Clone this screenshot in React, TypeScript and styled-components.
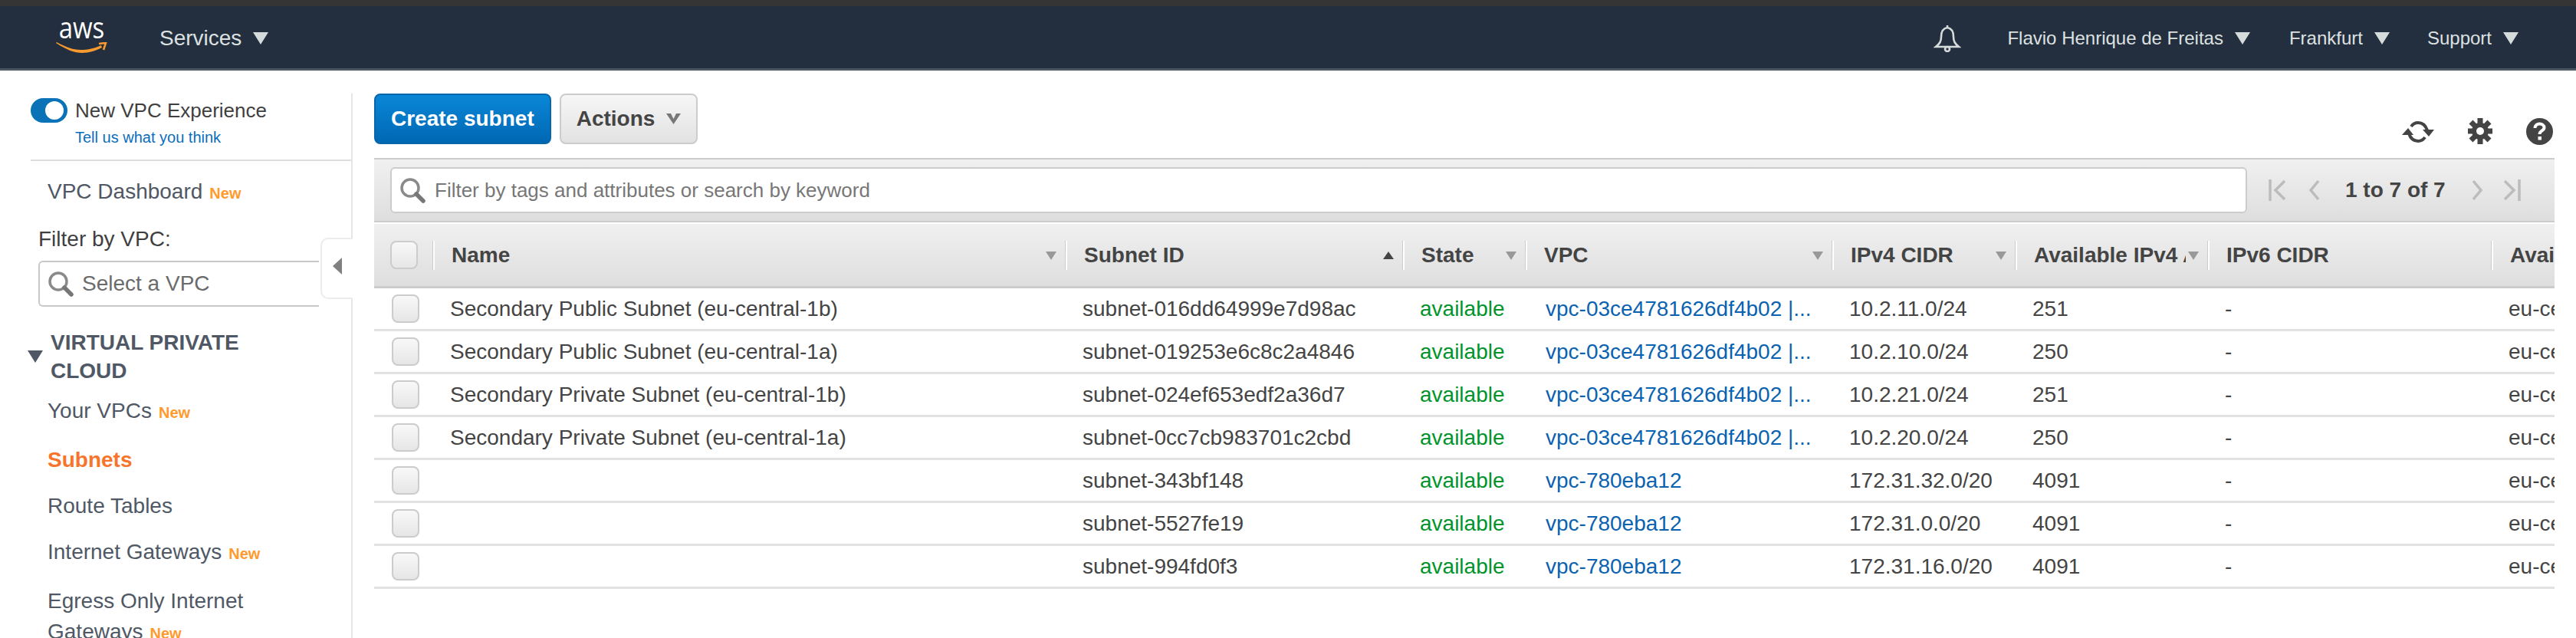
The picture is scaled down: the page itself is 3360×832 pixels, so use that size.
import styled, { createGlobalStyle } from 'styled-components';

const GlobalStyle = createGlobalStyle`
	html, body {
		margin: 0;
		padding: 0;
		background: #fff;
	}
	body {
		font-family: "Liberation Sans", Arial, sans-serif;
		color: #444;
	}
	* {
		box-sizing: border-box;
	}
`;

const COLUMNS = '79px 825px 440px 160px 400px 239px 251px 370px 80px';

const Page = styled.div`
	width: 3360px;
	height: 832px;
	overflow: hidden;
	display: flex;
	flex-direction: column;
`;

const TopStripe = styled.div`
	height: 8px;
	background: #353535;
	flex: none;
`;

const NavBar = styled.header`
	height: 84px;
	flex: none;
	display: flex;
	align-items: center;
	background: #232f3e;
	border-bottom: 3px solid #4a5664;
	padding: 3px 75px 0 73px;
`;

const Logo = styled.div`
	width: 67px;
	height: 50px;
	position: relative;
	margin-right: 68px;
`;

const LogoText = styled.span`
	display: block;
	font-family: "Open Sans", sans-serif;
	font-size: 33px;
	line-height: 34px;
	color: #fff;
	text-align: center;
	margin-top: -6px;
	transform: scaleY(1.18);
`;

const LogoSmile = styled.svg`
	position: absolute;
	left: 0;
	top: 30px;
`;

const NavItem = styled.div<{ $right?: number }>`
	display: flex;
	align-items: center;
	gap: 15px;
	color: #dde1e1;
	font-size: ${(p) => (p.$right ? 24 : 28)}px;
	margin-left: ${(p) => p.$right ?? 0}px;
	white-space: nowrap;
`;

const Caret = styled.span`
	width: 0;
	height: 0;
	border-left: 10px solid transparent;
	border-right: 10px solid transparent;
	border-top: 16px solid #d5dbdb;
`;

const Spacer = styled.div`
	flex: 1;
`;

const Body = styled.div`
	flex: 1;
	display: flex;
	min-height: 0;
	padding-top: 30px;
`;

const Sidebar = styled.aside`
	width: 460px;
	flex: none;
	border-right: 2px solid #e6e6e6;
	padding-left: 40px;
	position: relative;
`;

const ExperienceBox = styled.div`
	height: 88px;
	border-bottom: 2px solid #ddd;
	padding-top: 6px;
`;

const ExperienceRow = styled.div`
	display: flex;
	align-items: center;
	gap: 10px;
	font-size: 26px;
	color: #3f3f3f;
	line-height: 32px;
`;

const Toggle = styled.span`
	width: 48px;
	height: 32px;
	border-radius: 16px;
	background: #0a73b7;
	position: relative;
	flex: none;
	&::after {
		content: '';
		position: absolute;
		right: 5px;
		top: 4px;
		width: 24px;
		height: 24px;
		border-radius: 50%;
		background: #fff;
	}
`;

const FeedbackLink = styled.a`
	display: block;
	font-size: 20px;
	line-height: 24px;
	color: #0a6ebd;
	margin: 7px 0 0 58px;
`;

const NavList = styled.nav`
	padding: 20px 0 0 22px;
`;

const NavLink = styled.div<{ $active?: boolean; $top?: number }>`
	font-size: 28px;
	line-height: 40px;
	font-weight: ${(p) => (p.$active ? 700 : 400)};
	color: ${(p) => (p.$active ? '#f7742c' : '#4f5864')};
	margin-top: ${(p) => p.$top ?? 0}px;
	white-space: nowrap;
`;

const NewTag = styled.span`
	color: #ff9a2e;
	font-size: 20px;
	font-weight: 700;
	margin-left: 9px;
`;

const FilterBlock = styled.div`
	padding: 20px 0 0 10px;
`;

const FilterLabel = styled.div`
	font-size: 28px;
	line-height: 40px;
	color: #3f3f3f;
`;

const VpcSelect = styled.div`
	width: 366px;
	height: 60px;
	margin-top: 8px;
	border: 2px solid #c8c8c8;
	border-right: none;
	border-radius: 6px 0 0 6px;
	display: flex;
	align-items: center;
	gap: 11px;
	padding-left: 10px;
	font-size: 28px;
	color: #6b6b6b;
`;

const CollapseTab = styled.div`
	position: absolute;
	right: -2px;
	top: 188px;
	width: 42px;
	height: 80px;
	background: #fff;
	border: 2px solid #ececec;
	border-right: none;
	border-radius: 10px 0 0 10px;
	display: flex;
	align-items: center;
	justify-content: center;
	&::after {
		content: '';
		border-top: 11px solid transparent;
		border-bottom: 11px solid transparent;
		border-right: 12px solid #808080;
		margin-bottom: 6px;
	}
`;

const GroupHeading = styled.div`
	display: flex;
	align-items: center;
	gap: 10px;
	padding: 28px 0 0 0;
	margin-left: -4px;
	font-size: 28px;
	line-height: 37px;
	font-weight: 700;
	color: #4f5864;
`;

const GroupCaret = styled.span`
	flex: none;
	width: 0;
	height: 0;
	border-left: 10px solid transparent;
	border-right: 10px solid transparent;
	border-top: 16px solid #4f5864;
`;

const GroupLinks = styled.div`
	padding: 14px 0 0 22px;
`;

const Main = styled.main`
	flex: 1;
	min-width: 0;
	padding: 0 28px;
`;

const Toolbar = styled.div`
	height: 84px;
	display: flex;
	align-items: flex-start;
	gap: 11px;
`;

const ActionButton = styled.button<{ $primary?: boolean }>`
	height: 66px;
	display: flex;
	align-items: center;
	gap: 15px;
	padding: 0 20px;
	font: 700 28px "Liberation Sans", Arial, sans-serif;
	border-radius: 8px;
	color: ${(p) => (p.$primary ? '#fff' : '#444')};
	border: 2px solid ${(p) => (p.$primary ? '#0a66ab' : '#ccc')};
	background: ${(p) =>
		p.$primary
			? 'linear-gradient(#0a87d8, #0068b3)'
			: 'linear-gradient(#f6f6f6, #e2e2e2)'};
`;

const ToolIcons = styled.div`
	margin-left: auto;
	padding: 32px 2px 0 0;
	display: flex;
	align-items: flex-start;
	gap: 44px;
`;

const FilterBar = styled.div`
	height: 84px;
	display: flex;
	align-items: center;
	padding: 0 0 0 21px;
	border-top: 2px solid #ccc;
	border-bottom: 2px solid #ccc;
	background: linear-gradient(#f0f0f0, #dedede);
`;

const FilterInput = styled.div`
	width: 2422px;
	height: 60px;
	background: #fff;
	border: 2px solid #ccc;
	border-radius: 6px;
	display: flex;
	align-items: center;
	gap: 12px;
	padding-left: 10px;
	font-size: 26px;
	color: #777;
`;

const Pager = styled.div`
	display: flex;
	align-items: center;
	margin-left: 28px;
	font-size: 28px;
	font-weight: 700;
	color: #444;
`;

const PagerText = styled.span`
	margin: 0 35px 0 34px;
`;

const PagerGap = styled.span<{ $width: number }>`
	width: ${(p) => p.$width}px;
`;

const HeaderRow = styled.div`
	margin-top: 2px;
	height: 84px;
	display: grid;
	grid-template-columns: ${COLUMNS};
	background: linear-gradient(#f0f0f0, #dedede);
	border-bottom: 3px solid #ccc;
	padding-top: 22px;
	overflow: hidden;
`;

const HeaderCell = styled.div`
	height: 38px;
	display: flex;
	align-items: center;
	padding: 0 12px 0 22px;
	border-right: 2px solid #fff;
	box-shadow: inset -1px 0 0 #ccc;
	font-size: 28px;
	font-weight: 700;
	color: #444;
	min-width: 0;
	&:last-child {
		border-right: none;
		box-shadow: none;
		padding-right: 0;
	}
`;

const HeaderLabel = styled.span`
	flex: 1;
	min-width: 0;
	overflow: hidden;
	white-space: nowrap;
`;

const SortArrow = styled.span<{ $up?: boolean }>`
	flex: none;
	width: 0;
	height: 0;
	margin-left: 3px;
	border-left: 7px solid transparent;
	border-right: 7px solid transparent;
	border-top: ${(p) => (p.$up ? 'none' : '11px solid #999')};
	border-bottom: ${(p) => (p.$up ? '10px solid #444' : 'none')};
`;

const CheckCell = styled.div`
	padding: 0 0 0 21px;
	border-right: 2px solid #fff;
	box-shadow: inset -1px 0 0 #ccc;
	height: 38px;
`;

const Checkbox = styled.span`
	display: block;
	width: 36px;
	height: 37px;
	border: 2px solid #ccc;
	border-radius: 8px;
	background: linear-gradient(#f8f8f8, #e6e6e6);
`;

const DataRow = styled.div`
	height: 56px;
	display: grid;
	grid-template-columns: ${COLUMNS};
	align-items: center;
	border-bottom: 3px solid #e2e2e2;
	font-size: 28px;
	color: #444;
	overflow: hidden;
`;

const RowCheckCell = styled.div`
	padding-left: 23px;
`;

const Cell = styled.div<{ $tone?: 'ok' | 'link' }>`
	padding-left: ${(p) => (p.$tone === 'link' ? 24 : 20)}px;
	white-space: nowrap;
	overflow: hidden;
	color: ${(p) =>
		p.$tone === 'ok' ? '#00942b' : p.$tone === 'link' ? '#0a62b0' : '#444'};
`;

const SearchIcon = () => (
	<svg width="34" height="34" viewBox="0 0 34 34" fill="none">
		<circle cx="14" cy="14" r="11" stroke="#8a8a8a" strokeWidth="3.5" />
		<path d="M22 22l9 9" stroke="#777" strokeWidth="5.5" strokeLinecap="round" />
	</svg>
);

const BellIcon = () => (
	<svg width="36" height="36" viewBox="0 0 36 36" fill="none" stroke="#d5dbdb" strokeWidth="2.6">
		<path d="M18 1v3M18 4c-6 1-8 6-8 12 0 6-2 9-7 13h30c-5-4-7-7-7-13 0-6-2-11-8-12z" />
		<circle cx="18" cy="32" r="3" />
	</svg>
);

const Chevron = ({ dir, bar }: { dir: 'left' | 'right'; bar?: boolean }) => (
	<svg width={bar ? 22 : 14} height="28" viewBox={bar ? '0 0 22 28' : '0 0 14 28'} fill="none" stroke="#bcbcbc" strokeWidth="3.5">
		{dir === 'left' && !bar && <path d="M13 2L3 14l10 12" />}
		{dir === 'right' && !bar && <path d="M1 2l10 12L1 26" />}
		{dir === 'left' && bar && <path d="M2 0v28M21 2L9 14l12 12" />}
		{dir === 'right' && bar && <path d="M20 0v28M1 2l12 12L1 26" />}
	</svg>
);

const RefreshIcon = () => (
	<svg width="42" height="36" viewBox="0 0 42 36" fill="none">
		<path d="M12 11c2-3 5-5 9-5 6 0 10 4 12 10" stroke="#444" strokeWidth="4" />
		<path d="M30 25c-2 3-5 5-9 5-6 0-10-4-12-10" stroke="#444" strokeWidth="4" />
		<path d="M27 15h15l-7 9zM0 22h15L8 13z" fill="#444" />
	</svg>
);

const GearIcon = () => (
	<svg width="32" height="34" viewBox="0 0 32 34">
		<circle cx="16" cy="17" r="11" fill="#444" />
		{[0, 45, 90, 135, 180, 225, 270, 315].map((angle) => (
			<rect key={angle} x="12.500" y="0" width="7" height="8" fill="#444" transform={`rotate(${angle} 16 17)`} />
		))}
		<circle cx="16" cy="17" r="5" fill="#fff" />
	</svg>
);

const HelpIcon = () => (
	<svg width="35" height="35" viewBox="0 0 35 35">
		<circle cx="17.500" cy="17.500" r="17.500" fill="#444" />
		<path d="M11.500 13c0-4 3-5.500 6-5.500s6 2 6 5c0 4-6 4-6 8.500" fill="none" stroke="#fff" strokeWidth="4" />
		<rect x="15.500" y="24" width="4.500" height="4.500" fill="#fff" />
	</svg>
);

type Subnet = {
	name: string;
	id: string;
	vpc: string;
	cidr: string;
	free: string;
	zone: string;
};

const MAIN_VPC = 'vpc-03ce4781626df4b02 |...';
const DEFAULT_VPC = 'vpc-780eba12';

const subnets: Subnet[] = [
	{ name: 'Secondary Public Subnet (eu-central-1b)', id: 'subnet-016dd64999e7d98ac', vpc: MAIN_VPC, cidr: '10.2.11.0/24', free: '251', zone: 'eu-central-1b' },
	{ name: 'Secondary Public Subnet (eu-central-1a)', id: 'subnet-019253e6c8c2a4846', vpc: MAIN_VPC, cidr: '10.2.10.0/24', free: '250', zone: 'eu-central-1a' },
	{ name: 'Secondary Private Subnet (eu-central-1b)', id: 'subnet-024ef653edf2a36d7', vpc: MAIN_VPC, cidr: '10.2.21.0/24', free: '251', zone: 'eu-central-1b' },
	{ name: 'Secondary Private Subnet (eu-central-1a)', id: 'subnet-0cc7cb983701c2cbd', vpc: MAIN_VPC, cidr: '10.2.20.0/24', free: '250', zone: 'eu-central-1a' },
	{ name: '', id: 'subnet-343bf148', vpc: DEFAULT_VPC, cidr: '172.31.32.0/20', free: '4091', zone: 'eu-central-1a' },
	{ name: '', id: 'subnet-5527fe19', vpc: DEFAULT_VPC, cidr: '172.31.0.0/20', free: '4091', zone: 'eu-central-1b' },
	{ name: '', id: 'subnet-994fd0f3', vpc: DEFAULT_VPC, cidr: '172.31.16.0/20', free: '4091', zone: 'eu-central-1c' },
];

const headers = [
	{ label: 'Name' },
	{ label: 'Subnet ID', up: true },
	{ label: 'State' },
	{ label: 'VPC' },
	{ label: 'IPv4 CIDR' },
	{ label: 'Available IPv4 Addresses' },
	{ label: 'IPv6 CIDR', plain: true },
	{ label: 'Availability Zone', plain: true },
];

const App = () => (
	<Page>
		<GlobalStyle />
		<TopStripe />
		<NavBar>
			<Logo>
				<LogoText>aws</LogoText>
				<LogoSmile width="67" height="14" viewBox="0 0 67 14" fill="none">
					<path d="M0 1C14 10 24 14 34 14C44 14 52 11 60 7L59 4C50 8 42 10 32 10C22 10 12 6 1 0z" fill="#f79b2e" />
					<path d="M56 2l9-1-3 9" stroke="#f79b2e" strokeWidth="2.600" />
				</LogoSmile>
			</Logo>
			<NavItem>
				Services <Caret />
			</NavItem>
			<Spacer />
			<BellIcon />
			<NavItem $right={60}>
				Flavio Henrique de Freitas <Caret />
			</NavItem>
			<NavItem $right={51}>
				Frankfurt <Caret />
			</NavItem>
			<NavItem $right={49}>
				Support <Caret />
			</NavItem>
		</NavBar>
		<Body>
			<Sidebar>
				<ExperienceBox>
					<ExperienceRow>
						<Toggle />
						New VPC Experience
					</ExperienceRow>
					<FeedbackLink>Tell us what you think</FeedbackLink>
				</ExperienceBox>
				<NavList>
					<NavLink>
						VPC Dashboard<NewTag>New</NewTag>
					</NavLink>
				</NavList>
				<FilterBlock>
					<FilterLabel>Filter by VPC:</FilterLabel>
					<VpcSelect>
						<SearchIcon />
						Select a VPC
					</VpcSelect>
				</FilterBlock>
				<CollapseTab />
				<GroupHeading>
					<GroupCaret />
					<span>
						VIRTUAL PRIVATE
						<br />
						CLOUD
					</span>
				</GroupHeading>
				<GroupLinks>
					<NavLink>
						Your VPCs<NewTag>New</NewTag>
					</NavLink>
					<NavLink $active $top={22}>
						Subnets
					</NavLink>
					<NavLink $top={20}>Route Tables</NavLink>
					<NavLink $top={20}>
						Internet Gateways<NewTag>New</NewTag>
					</NavLink>
					<NavLink $top={22}>
						Egress Only Internet
						<br />
						Gateways<NewTag>New</NewTag>
					</NavLink>
				</GroupLinks>
			</Sidebar>
			<Main>
				<Toolbar>
					<ActionButton $primary>Create subnet</ActionButton>
					<ActionButton>
						Actions
						<svg width="19" height="14" viewBox="0 0 19 14">
							<path d="M0 0h6l3.500 7L13 0h6l-9.500 14z" fill="#777" />
						</svg>
					</ActionButton>
					<ToolIcons>
						<RefreshIcon />
						<GearIcon />
						<HelpIcon />
					</ToolIcons>
				</Toolbar>
				<FilterBar>
					<FilterInput>
						<SearchIcon />
						Filter by tags and attributes or search by keyword
					</FilterInput>
					<Pager>
						<Chevron dir="left" bar />
						<PagerGap $width={30} />
						<Chevron dir="left" />
						<PagerText>1 to 7 of 7</PagerText>
						<Chevron dir="right" />
						<PagerGap $width={27} />
						<Chevron dir="right" bar />
					</Pager>
				</FilterBar>
				<HeaderRow>
					<CheckCell>
						<Checkbox />
					</CheckCell>
					{headers.map((h) => (
						<HeaderCell key={h.label}>
							<HeaderLabel>{h.label}</HeaderLabel>
							{!h.plain && <SortArrow $up={h.up} />}
						</HeaderCell>
					))}
				</HeaderRow>
				{subnets.map((s) => (
					<DataRow key={s.id}>
						<RowCheckCell>
							<Checkbox />
						</RowCheckCell>
						<Cell>{s.name}</Cell>
						<Cell>{s.id}</Cell>
						<Cell $tone="ok">available</Cell>
						<Cell $tone="link">{s.vpc}</Cell>
						<Cell>{s.cidr}</Cell>
						<Cell>{s.free}</Cell>
						<Cell>-</Cell>
						<Cell>{s.zone}</Cell>
					</DataRow>
				))}
			</Main>
		</Body>
	</Page>
);

export default App;
